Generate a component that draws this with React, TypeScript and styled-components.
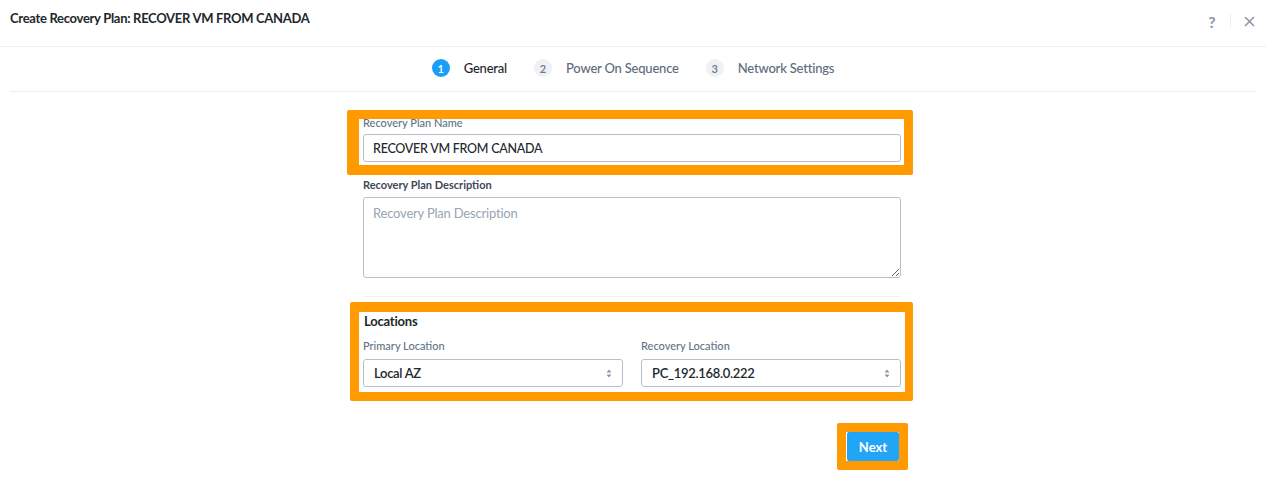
import React from "react";
import styled, { createGlobalStyle } from "styled-components";

const GlobalStyle = createGlobalStyle`
  html, body {
    margin: 0;
    padding: 0;
    background: #fff;
    min-height: 486px;
  }
  body {
    font-family: Lato, "Open Sans", sans-serif;
    color: #22272e;
  }
`;

const Header = styled.header`
  height: 47px;
  box-sizing: border-box;
  padding: 10px 10px 0 10px;
  border-bottom: 1px solid #eeeff1;
  display: flex;
  justify-content: space-between;
  align-items: flex-start;
`;

const Title = styled.h1`
  margin: 0;
  font-size: 13px;
  line-height: 16px;
  font-weight: 700;
  letter-spacing: -0.3px;
  color: #22272e;
`;

const HeaderTools = styled.div`
  display: flex;
  align-items: center;
  gap: 11px;
  padding-top: 2px;
  color: #8a96a6;
`;

const ToolIcon = styled.span`
  display: flex;
  align-items: center;
  justify-content: center;
  width: 14px;
  height: 18px;
  font-size: 16px;
  font-weight: 700;
`;

const ToolDivider = styled.span`
  width: 1px;
  height: 14px;
  background: #eceef1;
`;

const Steps = styled.nav`
  margin: 0 10px;
  height: 42px;
  padding-bottom: 2px;
  border-bottom: 1px solid #eeeff1;
  display: flex;
  justify-content: center;
  align-items: center;
  gap: 27px;
`;

const Step = styled.div`
  display: flex;
  align-items: center;
  gap: 14px;
`;

const StepNumber = styled.span<{ $active?: boolean }>`
  width: 18px;
  height: 18px;
  border-radius: 50%;
  display: flex;
  align-items: center;
  justify-content: center;
  font-size: 11px;
  font-weight: 600;
  background: ${(p) => (p.$active ? "#1b9ef5" : "#f0f1f4")};
  color: ${(p) => (p.$active ? "#fff" : "#6b7787")};
`;

const StepLabel = styled.span<{ $active?: boolean }>`
  font-size: 13px;
  font-weight: 500;
  letter-spacing: -0.2px;
  color: ${(p) => (p.$active ? "#22272e" : "#5e6b7c")};
`;

const Form = styled.form`
  position: relative;
  width: 538px;
  margin: 0 auto;
  padding: 24px 2px 30px 0;
`;

const Field = styled.div<{ $gap?: number }>`
  display: flex;
  flex-direction: column;
  margin-bottom: ${(p) => p.$gap ?? 0}px;
`;

const Label = styled.label<{ $strong?: boolean; $space?: number }>`
  font-size: 11px;
  line-height: 14px;
  font-weight: ${(p) => (p.$strong ? 700 : 500)};
  color: ${(p) => (p.$strong ? "#3d4856" : "#627386")};
  margin-bottom: ${(p) => p.$space ?? 4}px;
`;

const TextInput = styled.input`
  box-sizing: border-box;
  height: 28px;
  width: 100%;
  padding: 0 9px;
  border: 1px solid #b8bfca;
  border-radius: 3px;
  font-family: inherit;
  font-size: 12.5px;
  font-weight: 500;
  letter-spacing: -0.25px;
  color: #22272e;
  outline: none;
`;

const TextArea = styled.textarea`
  box-sizing: border-box;
  height: 81px;
  width: 100%;
  padding: 7px 9px;
  border: 1px solid #b8bfca;
  border-radius: 3px;
  font-family: inherit;
  font-size: 13px;
  letter-spacing: -0.2px;
  color: #22272e;
  outline: none;
  &::placeholder {
    color: #9aa5b5;
  }
`;

const Section = styled.section`
  margin-top: 18px;
  border-top: 1px solid #f0f1f3;
  padding-top: 16px;
`;

const SectionTitle = styled.h2`
  margin: 0 0 10px 1px;
  font-size: 13px;
  line-height: 16px;
  font-weight: 700;
  letter-spacing: -0.2px;
  color: #22272e;
`;

const Columns = styled.div`
  display: grid;
  grid-template-columns: 1fr 1fr;
  gap: 18px;
`;

const SelectBox = styled.div`
  box-sizing: border-box;
  height: 28px;
  padding: 0 10px;
  border: 1px solid #b8bfca;
  border-radius: 3px;
  display: flex;
  align-items: center;
  justify-content: space-between;
  font-size: 13px;
  font-weight: 600;
  letter-spacing: -0.3px;
  color: #22272e;
`;

const Actions = styled.div`
  display: flex;
  justify-content: flex-end;
  margin-top: 45px;
  padding-right: 2px;
`;

const PrimaryButton = styled.button`
  height: 29px;
  width: 52px;
  border: none;
  border-radius: 2px;
  background: #22a5f7;
  color: #fff;
  font-family: inherit;
  font-size: 13px;
  font-weight: 700;
  cursor: pointer;
`;

const Highlight = styled.div<{ $top: number; $left: number; $w: number; $h: number; $bw: string }>`
  position: absolute;
  box-sizing: border-box;
  top: ${(p) => p.$top}px;
  left: ${(p) => p.$left}px;
  width: ${(p) => p.$w}px;
  height: ${(p) => p.$h}px;
  border: solid #ff9a00;
  border-width: ${(p) => p.$bw};
  border-radius: 2px;
  pointer-events: none;
`;

const Updown = () => (
  <svg width="6" height="9" viewBox="0 0 6 9" fill="#8a96a6">
    <path d="M3 0.5 L5.5 3.5 H0.5 Z" />
    <path d="M3 8.5 L5.5 5.5 H0.5 Z" />
  </svg>
);

const steps = ["General", "Power On Sequence", "Network Settings"];

export default function App() {
  return (
    <>
      <GlobalStyle />
      <Header>
        <Title>Create Recovery Plan: RECOVER VM FROM CANADA</Title>
        <HeaderTools>
          <ToolIcon>?</ToolIcon>
          <ToolDivider />
          <ToolIcon>
            <svg width="11" height="11" viewBox="0 0 11 11" stroke="#8a96a6" strokeWidth="1.6" strokeLinecap="round">
              <path d="M1.5 1.5 L9.5 9.5 M9.5 1.5 L1.5 9.5" />
            </svg>
          </ToolIcon>
        </HeaderTools>
      </Header>
      <Steps>
        {steps.map((s, i) => (
          <Step key={s}>
            <StepNumber $active={i === 0}>{i + 1}</StepNumber>
            <StepLabel $active={i === 0}>{s}</StepLabel>
          </Step>
        ))}
      </Steps>
      <Form onSubmit={(e) => e.preventDefault()}>
        <Field $gap={16}>
          <Label>Recovery Plan Name</Label>
          <TextInput readOnly value="RECOVER VM FROM CANADA" />
        </Field>
        <Field>
          <Label $strong $space={5}>Recovery Plan Description</Label>
          <TextArea placeholder="Recovery Plan Description" />
        </Field>
        <Section>
          <SectionTitle>Locations</SectionTitle>
          <Columns>
            <Field>
              <Label $space={6}>Primary Location</Label>
              <SelectBox>
                Local AZ
                <Updown />
              </SelectBox>
            </Field>
            <Field>
              <Label $space={6}>Recovery Location</Label>
              <SelectBox>
                PC_192.168.0.222
                <Updown />
              </SelectBox>
            </Field>
          </Columns>
        </Section>
        <Actions>
          <PrimaryButton type="submit">Next</PrimaryButton>
        </Actions>
        <Highlight $top={18} $left={-16} $w={566} $h={65} $bw="9px 9px 10px 12px" />
        <Highlight $top={210} $left={-13} $w={563} $h={99} $bw="10px 8px 9px 9px" />
        <Highlight $top={331} $left={474} $w={71} $h={47} $bw="9px" />
      </Form>
    </>
  );
}
